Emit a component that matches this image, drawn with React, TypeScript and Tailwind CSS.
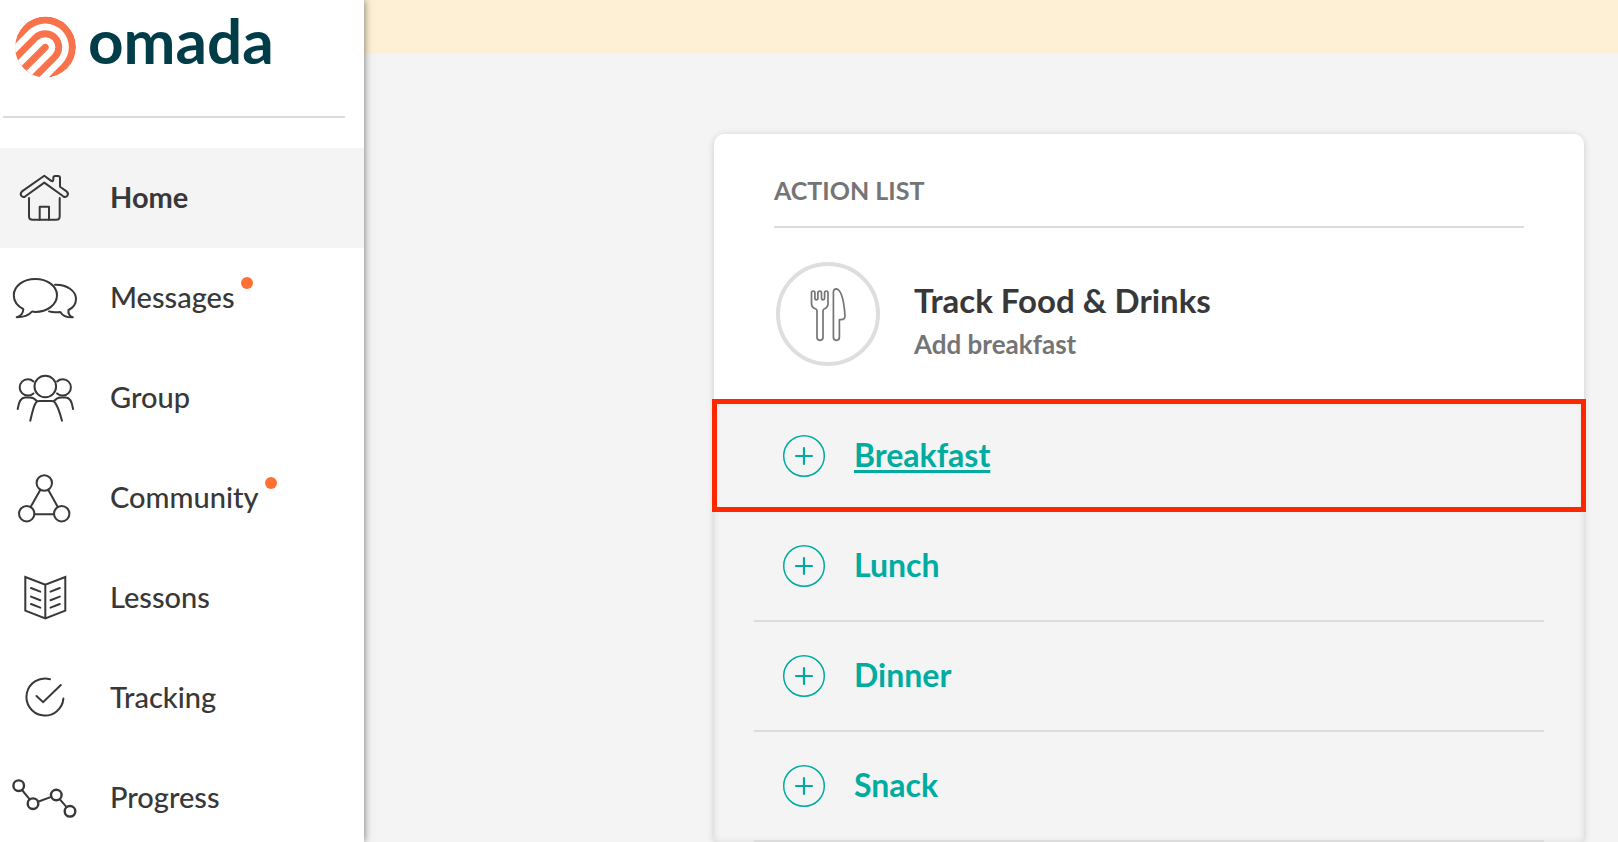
import React from 'react';

interface NavItem {
  label: string;
  icon: React.ReactNode;
  active?: boolean;
  unread?: boolean;
}

const navItems: NavItem[] = [
  {
    label: 'Home',
    active: true,
    icon: (
      <>
        <path d="M44.3 7.8 L50.5 12.4 Q53.3 14.4 53.3 11.5 V10 Q53.3 8 55.3 8 H58 Q60 8 60 10 V18.8 L66.6 23.4 Q68.8 25.3 67.4 27.6 Q65.6 29.9 63.2 28.3 L44.3 14.6 L25.4 28.3 Q23 29.9 21.2 27.6 Q19.9 25.3 22 23.4 Z" />
        <path d="M29 30 V48.2 Q29 51.7 32.5 51.7 H56.2 Q59.7 51.7 59.7 48.2 V30" />
        <path d="M39.7 51.7 V38.7 H49 V51.7" />
      </>
    ),
  },
  {
    label: 'Messages',
    unread: true,
    icon: (
      <>
        <path d="M32.3 43.4 C29 47 24 49.3 16.7 49.3 C22 47.5 23.2 44.5 23.3 41.2 C17 37.8 13.8 33 13.8 27.3 C13.8 18 23.4 11 35.3 11 S57 18 57 27.3 S47.3 44 35.3 44 Q33.8 43.9 32.3 43.4 Z" />
        <path d="M55 16.8 C67 16.4 76 23 76 31 C76 36 73.5 39.6 68.5 42 C68 45 69.5 48 72.7 49.3 C67 49.5 62.5 47.5 60.3 43.9 C57 44.3 52 44.3 49 43.4" />
      </>
    ),
  },
  {
    label: 'Group',
    icon: (
      <>
        <circle cx="45.3" cy="18.5" r="10.8" />
        <path d="M33.5 13.4 A8.2 8.2 0 1 0 33.5 25.4" />
        <path d="M57.1 13.4 A8.2 8.2 0 1 1 57.1 25.4" />
        <path d="M30.3 52.7 C32 45 33.5 38 35.8 34.8 Q37 33 39.5 33 H51.5 Q54 33 55.2 34.8 C57.5 38 60 45 62 52.7" />
        <path d="M17.7 41 C18.6 35 20 29.5 25 29.5 H30 Q33.8 29.5 36.8 33" />
        <path d="M73.1 41 C72.2 35 70.6 29.5 65.8 29.5 H60.8 Q57 29.5 54 33" />
      </>
    ),
  },
  {
    label: 'Community',
    unread: true,
    icon: (
      <>
        <circle cx="44.3" cy="15" r="7.7" />
        <circle cx="26.7" cy="45.7" r="7.7" />
        <circle cx="61.7" cy="45.7" r="7.7" />
        <path d="M40.4 21.8 L30.6 39 M48.2 21.8 L57.8 39 M34.5 46.2 H54" />
      </>
    ),
  },
  {
    label: 'Lessons',
    icon: (
      <>
        <path strokeLinejoin="miter" d="M25.3 9 L45.3 16.8 L65.3 9 V42.6 L45.3 50.5 L25.3 42.6 Z M45.3 16.8 V50.5" />
        <path d="M31 20 L40.3 23.6 M31 28.6 L40.3 32.2 M31 36 L40.3 39.6" />
        <path d="M59.8 20 L50.5 23.6 M59.8 28.6 L50.5 32.2 M59.8 36 L50.5 39.6" />
      </>
    ),
  },
  {
    label: 'Tracking',
    icon: (
      <>
        <path d="M50 11.2 A18.5 18.5 0 1 0 63.4 30.4" />
        <path strokeLinejoin="miter" d="M36.5 28 L43.1 34.2 L60.8 17" />
      </>
    ),
  },
  {
    label: 'Progress',
    icon: (
      <>
        <circle cx="18.7" cy="17.7" r="5.3" strokeWidth="2.4" />
        <circle cx="33" cy="35.7" r="5.3" strokeWidth="2.4" />
        <circle cx="56.3" cy="27" r="5.3" strokeWidth="2.4" />
        <circle cx="70" cy="43.3" r="5.3" strokeWidth="2.4" />
        <path d="M22 22 L29.7 31.4 M38 33.8 L51.3 28.9 M59.7 31.2 L66.6 39.2" />
      </>
    ),
  },
];

const meals = ['Breakfast', 'Lunch', 'Dinner', 'Snack'];

function Logo() {
  return (
    <a href="#" className="flex items-start gap-3 pl-[15px] pt-4 text-[#003d49]">
      <svg viewBox="16 17 60 61" className="h-[62px] w-[61px] shrink-0" aria-hidden="true">
        <defs>
          <clipPath id="mark">
            <circle cx="46" cy="47.5" r="30" />
          </clipPath>
        </defs>
        <g clipPath="url(#mark)" strokeLinecap="round">
          <circle cx="46" cy="47.5" r="30" fill="#f8734c" />
          <path d="M45.7 47.8 L-14.3 107.8" stroke="#fff" strokeWidth="46.6" />
          <path d="M45.7 47.8 L-14.3 107.8" stroke="#f8734c" strokeWidth="33.4" />
          <path d="M45.7 47.8 L-14.3 107.8" stroke="#fff" strokeWidth="20" />
          <path d="M45.7 47.8 L-14.3 107.8" stroke="#f8734c" strokeWidth="6.8" />
        </g>
      </svg>
      <span className="text-[62px] font-bold leading-[48px]">omada</span>
    </a>
  );
}

function Sidebar() {
  return (
    <aside className="z-10 w-[364px] shrink-0 bg-white shadow-[0_0_8px_rgba(0,0,0,0.55)]">
      <Logo />
      <hr className="ml-[3px] mr-[19px] mt-[38px] border-t-2 border-[#dcdcdc]" />
      <nav className="mt-[30px]">
        {navItems.map((item) => (
          <a
            key={item.label}
            href="#"
            className={`flex h-[100px] items-center text-[29px] leading-[40px] text-[#383838] ${
              item.active ? 'bg-[#f4f4f4] font-bold' : 'font-medium'
            }`}
          >
            <svg
              viewBox="0 0 80 60"
              className="mr-[30px] h-[60px] w-20 shrink-0"
              fill="none"
              stroke="currentColor"
              strokeWidth="2"
              strokeLinecap="round"
              strokeLinejoin="round"
              aria-hidden="true"
            >
              {item.icon}
            </svg>
            <span className="relative pb-[2px]">
              {item.label}
              {item.unread && (
                <span className="absolute left-full top-0 ml-1.5 size-3 rounded-full bg-[#ff7133]" />
              )}
            </span>
          </a>
        ))}
      </nav>
    </aside>
  );
}

function MealRow({ name, highlighted }: { name: string; highlighted: boolean }) {
  return (
    <li className="relative px-10">
      <div className={`border-b-2 ${highlighted ? 'border-transparent' : 'border-[#dcdcdc]'}`}>
        <a
          href="#"
          className={`flex h-[108px] items-center gap-7 pl-7 text-[32px] font-bold leading-[44px] text-[#00aca0] ${
            highlighted ? 'underline decoration-3 underline-offset-3' : ''
          }`}
        >
          <svg viewBox="0 0 44 44" className="size-11 shrink-0" fill="none" stroke="currentColor" aria-hidden="true">
            <circle cx="22" cy="22" r="20.3" strokeWidth="1.5" />
            <path d="M22 14 V30 M14 22 H30" strokeWidth="2.2" strokeLinecap="round" />
          </svg>
          <span className="pb-[2px]">{name}</span>
        </a>
      </div>
      {highlighted && (
        <div className="pointer-events-none absolute -inset-x-[2px] -top-[3px] bottom-0 border-5 border-[#ff2600]" />
      )}
    </li>
  );
}

function ActionList() {
  return (
    <section className="ml-[350px] mr-[34px] mt-20 rounded-t-[10px] bg-white shadow-[0_1px_7px_rgba(0,0,0,0.16)]">
      <div className="px-[60px] pt-9">
        <h2 className="border-b-2 border-[#dcdcdc] pb-4 text-[25px] font-bold leading-[40px] text-[#757575]">
          ACTION LIST
        </h2>
        <div className="flex items-center gap-[34px] pb-9 pl-[2px] pt-[34px]">
          <div className="flex size-[104px] shrink-0 items-center justify-center rounded-full border-4 border-[#dedede]">
            <svg
              viewBox="0 0 40 56"
              className="h-14 w-10"
              fill="none"
              stroke="#757575"
              strokeWidth="1.7"
              strokeLinejoin="round"
              aria-hidden="true"
            >
              <path d="M3.5 7 Q3.5 5 5.2 5 T6.9 7 V12 Q6.9 13.8 8.4 13.8 T9.9 12 V7 Q9.9 5 11.7 5 T13.5 7 V12 Q13.5 13.8 15 13.8 T16.6 12 V7 Q16.6 5 18.3 5 T20 7 V17.5 Q20 21.5 16.5 22.8 Q15 23.3 15 25 V51.3 Q15 54.3 12 54.3 T9 51.3 V25 Q9 23.3 7.4 22.8 Q3.5 21.5 3.5 17.5 Z" />
              <path d="M25.4 6.5 Q25.4 2.9 28.5 2.9 Q35.3 4.5 37 30 Q37 33.5 33 33.6 H31.4 V51.3 Q31.4 54.3 28.4 54.3 T25.4 51.3 Z" />
            </svg>
          </div>
          <div className="pt-4">
            <h3 className="text-[33px] font-bold leading-[44px] text-[#383838]">Track Food &amp; Drinks</h3>
            <p className="text-[26px] font-bold leading-[44px] text-[#757575]">Add breakfast</p>
          </div>
        </div>
      </div>
      <ul className="bg-[#f4f4f4] shadow-[inset_0_0_7px_rgba(0,0,0,0.1)]">
        {meals.map((meal) => (
          <MealRow key={meal} name={meal} highlighted={meal === 'Breakfast'} />
        ))}
      </ul>
    </section>
  );
}

export default function App() {
  return (
    <div className="flex h-screen overflow-hidden bg-[#f4f4f4] font-[Lato,sans-serif]">
      <Sidebar />
      <main className="min-w-0 flex-1">
        <div className="h-[54px] bg-[#fdf0d5]" />
        <ActionList />
      </main>
    </div>
  );
}
